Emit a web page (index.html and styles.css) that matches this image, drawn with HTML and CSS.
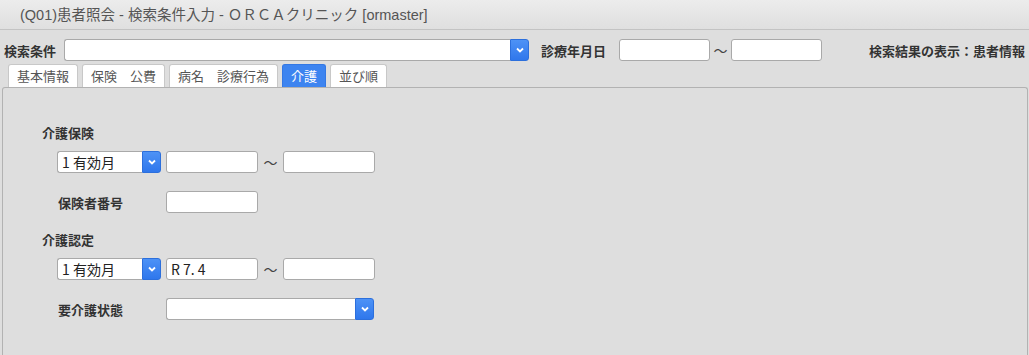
FILE: index.html
```html
<!DOCTYPE html>
<html lang="ja">
  <head>
    <meta charset="UTF-8" />
    <title>患者照会</title>
    <link rel="stylesheet" href="styles.css">
  </head>
  <body>
    <div class="titlebar">(Q01)患者照会 - 検索条件入力 - ＯＲＣＡクリニック [ormaster]</div>

    <div class="toolbar">
      <span class="label">検索条件</span>
      <div class="combo combo-search">
        <div class="field"></div>
        <div class="drop"><svg width="8" height="6" viewBox="0 0 8 6"><path d="M1 1.5 L4 4.5 L7 1.5" fill="none" stroke="#fff" stroke-width="1.8"/></svg></div>
      </div>
      <span class="label label-date">診療年月日</span>
      <div class="input date"></div>
      <span class="tilde">〜</span>
      <div class="input date"></div>
      <span class="label label-result">検索結果の表示：患者情報</span>
    </div>

    <div class="tabs">
      <div class="tab">基本情報</div>
      <div class="tab">保険　公費</div>
      <div class="tab">病名　診療行為</div>
      <div class="tab active">介護</div>
      <div class="tab">並び順</div>
    </div>

    <div class="panel">
      <!-- 介護保険 -->
      <div class="section-label">介護保険</div>
      <div class="row">
        <div class="combo combo-small">
          <div class="field">1 有効月</div>
          <div class="drop"><svg width="8" height="6" viewBox="0 0 8 6"><path d="M1 1.5 L4 4.5 L7 1.5" fill="none" stroke="#fff" stroke-width="1.8"/></svg></div>
        </div>
        <div class="input small"></div>
        <span class="tilde wide">〜</span>
        <div class="input small"></div>
      </div>
      <div class="row row-sub">
        <span class="label sub">保険者番号</span>
        <div class="input small"></div>
      </div>

      <!-- 介護認定 -->
      <div class="section-label second">介護認定</div>
      <div class="row">
        <div class="combo combo-small">
          <div class="field">1 有効月</div>
          <div class="drop"><svg width="8" height="6" viewBox="0 0 8 6"><path d="M1 1.5 L4 4.5 L7 1.5" fill="none" stroke="#fff" stroke-width="1.8"/></svg></div>
        </div>
        <div class="input small">R 7. 4</div>
        <span class="tilde wide">〜</span>
        <div class="input small"></div>
      </div>
      <div class="row row-sub">
        <span class="label sub">要介護状態</span>
        <div class="combo combo-state">
          <div class="field"></div>
          <div class="drop"><svg width="8" height="6" viewBox="0 0 8 6"><path d="M1 1.5 L4 4.5 L7 1.5" fill="none" stroke="#fff" stroke-width="1.8"/></svg></div>
        </div>
      </div>
    </div>
  </body>
</html>
```

FILE: styles.css
```css
body {
  margin: 0;
  background-color: #dedede;
  font-family: "Noto Sans CJK JP", "Liberation Sans", sans-serif;
  font-size: 13px;
  color: #333;
  overflow: hidden;
}
.titlebar {
  height: 29px;
  line-height: 30px;
  padding-left: 20px;
  font-family: "Liberation Sans", "Noto Sans CJK JP", sans-serif;
  font-size: 14.5px;
  color: #555;
  background: linear-gradient(#ececec, #dfdfdf);
  border-bottom: 1px solid #c3c3c3;
}
.toolbar {
  display: flex;
  align-items: center;
  height: 22px;
  margin-top: 9px;
  padding: 0 4px;
}
.label {
  font-weight: bold;
  color: #333;
  white-space: nowrap;
}
.label-date {
  margin-left: 12px;
  margin-right: 13px;
}
.label-result {
  margin-left: auto;
}
.combo {
  display: flex;
  height: 22px;
  box-sizing: border-box;
}
.combo .field {
  flex: 1;
  background: #fff;
  border: 1px solid #a9a9a9;
  border-right: none;
  border-radius: 3px 0 0 3px;
  padding-left: 4px;
  line-height: 20px;
  font-size: 14px;
  color: #222;
}
.drop {
  width: 19px;
  display: flex;
  align-items: center;
  justify-content: center;
  background: linear-gradient(#4d92f6, #2f77ec);
  border: 1px solid #2c6fdc;
  border-radius: 0 3px 3px 0;
  box-sizing: border-box;
}
.combo-search {
  width: 465px;
  margin-left: 8px;
}
.input {
  height: 22px;
  box-sizing: border-box;
  background: #fff;
  border: 1px solid #a9a9a9;
  border-radius: 3px;
  padding-left: 4px;
  line-height: 20px;
  font-size: 14px;
  color: #222;
}
.date {
  width: 91px;
}
.tilde {
  width: 21px;
  text-align: center;
  font-size: 14px;
  color: #444;
}
.tilde.wide {
  width: 25px;
}
.tabs {
  display: flex;
  gap: 4px;
  margin-top: 3px;
  padding-left: 8px;
  height: 23px;
}
.tab {
  padding: 0 8px;
  line-height: 22px;
  background: #fff;
  color: #555;
  border: 1px solid #c8c8c8;
  border-bottom: none;
  border-radius: 3px 3px 0 0;
  white-space: nowrap;
}
.tab.active {
  background: #3d84f0;
  border-color: #3478e4;
  color: #fff;
}
.panel {
  margin: 0 1px 0 2px;
  height: 268px;
  border: 1px solid #b2b2b2;
  border-bottom: none;
  border-radius: 3px 3px 0 0;
  background: #dedede;
  padding: 36px 0 0 39px;
  box-sizing: border-box;
}
.section-label {
  font-weight: bold;
  height: 18px;
  line-height: 18px;
}
.section-label.second {
  margin-top: 18px;
}
.row {
  display: flex;
  align-items: center;
  margin-top: 9px;
  margin-left: 15px;
}
.row-sub {
  margin-top: 18px;
}
.label.sub {
  width: 109px;
  padding-left: 1px;
  box-sizing: border-box;
}
.combo-small {
  width: 104px;
  margin-right: 5px;
}
.small {
  width: 92px;
}
.combo-state {
  width: 208px;
}
```
